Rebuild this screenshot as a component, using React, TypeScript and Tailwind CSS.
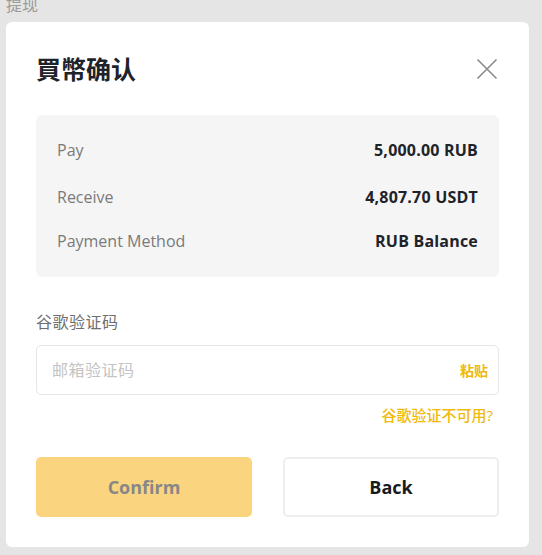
import React from "react";

const font = { fontFamily: '"Open Sans", "Noto Sans CJK SC", sans-serif' };

export default function App() {
  return (
    <div className="relative w-[542px] h-[555px] bg-[#e5e5e5] overflow-hidden" style={font}>
      <div className="absolute left-[6px] top-[-5px] text-[16px] leading-[20px] text-[#9a9a9a]">提现</div>
      <div className="pt-[22px] pl-[6px]">
        <div className="w-[523px] h-[525px] bg-white rounded-[6px] px-[30px] pt-[30px] flex flex-col">
          <div className="flex items-center justify-between h-[34px]">
            <div className="text-[25px] font-bold text-[#1e2329] leading-[34px]">買幣确认</div>
            <svg width="22" height="22" viewBox="0 0 22 22" className="mr-[1px]">
              <path d="M1.5 1.5 L20.5 20.5 M20.5 1.5 L1.5 20.5" stroke="#8a8a8a" strokeWidth="1.6" fill="none" />
            </svg>
          </div>
          <div className="mt-[29px] bg-[#f5f5f5] rounded-[6px] px-[21px] pt-[24px] pb-[25px] flex flex-col gap-[24px]">
            <div className="flex justify-between items-center h-[22px]">
              <span className="text-[16px] text-[#7a7a7a]">Pay</span>
              <span className="text-[16px] font-bold text-[#1e2329] tracking-[0.2px]">5,000.00 RUB</span>
            </div>
            <div className="flex justify-between items-center h-[22px] mt-[1px]">
              <span className="text-[16px] text-[#7a7a7a]">Receive</span>
              <span className="text-[16px] font-bold text-[#1e2329] tracking-[0.2px]">4,807.70 USDT</span>
            </div>
            <div className="flex justify-between items-center h-[22px] -mt-[2px]">
              <span className="text-[16px] text-[#7a7a7a]">Payment Method</span>
              <span className="text-[16px] font-bold text-[#1e2329] tracking-[0.2px]">RUB Balance</span>
            </div>
          </div>
          <div className="mt-[33px] text-[16px] leading-[24px] text-[#6f6f6f] tracking-[0.5px]">谷歌验证码</div>
          <div className="mt-[11px] h-[50px] border border-[#e6e6e6] rounded-[5px] flex items-center justify-between pl-[15px] pr-[10px]">
            <span className="text-[16px] text-[#c4c4c4] tracking-[0.5px]">邮箱验证码</span>
            <span className="text-[14px] font-bold text-[#f0b90b]">粘贴</span>
          </div>
          <div className="mt-[10px] flex justify-end pr-[6px]">
            <span className="text-[15px] leading-[20px] text-[#f0b90b] font-medium">谷歌验证不可用?</span>
          </div>
          <div className="mt-[32px] flex gap-[31px]">
            <button className="w-[216px] h-[60px] rounded-[5px] bg-[#fbd47f] text-[18px] font-bold text-[#878787]">Confirm</button>
            <button className="w-[216px] h-[60px] rounded-[5px] bg-white border-2 border-[#eeeeee] text-[18px] font-bold text-[#1a1a1a]">Back</button>
          </div>
        </div>
      </div>
    </div>
  );
}
